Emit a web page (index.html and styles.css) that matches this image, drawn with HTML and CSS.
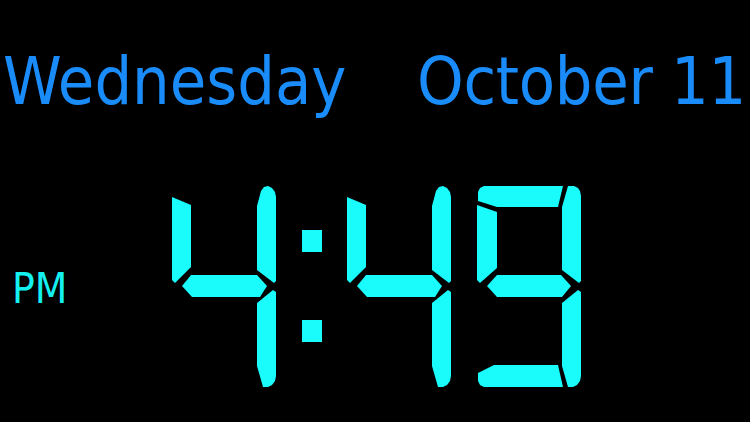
FILE: index.html
```html
<!DOCTYPE html>
<html>
<head>
<meta charset="utf-8">
<link rel="stylesheet" href="styles.css">
</head>
<body>
<div class="screen">
  <div class="date-row">
    <span class="day">Wednesday</span>
    <span class="date">October 11</span>
  </div>
  <div class="time-row">
    <div class="ampm">PM</div>
    <div class="clock">
      <svg class="digit" viewBox="0 0 105 201" width="105" height="201">
        <polygon points="0,11 19,19 19,81 3,97 0,94"/>
        <polygon points="10,100 19,89 85,89 95,100 88,111 20,111"/>
        <polygon points="85,20 89,5 92,1 96,0 100,2 103,6 104,11 104,95 102,97 85,84"/>
        <polygon points="85,117 101,104 104,106 104,190 103,195 100,199 96,201 91,201 85,180"/>
      </svg>
      <div class="colon">
        <div class="dot"></div>
        <div class="dot"></div>
      </div>
      <svg class="digit" viewBox="0 0 105 201" width="105" height="201">
        <polygon points="0,11 19,19 19,81 3,97 0,94"/>
        <polygon points="10,100 19,89 85,89 95,100 88,111 20,111"/>
        <polygon points="85,20 89,5 92,1 96,0 100,2 103,6 104,11 104,95 102,97 85,84"/>
        <polygon points="85,117 101,104 104,106 104,190 103,195 100,199 96,201 91,201 85,180"/>
      </svg>
      <svg class="digit" viewBox="0 0 105 201" width="105" height="201">
        <polygon points="1,15 1,6 3,2 7,0 86,0 81,21 20,21"/>
        <polygon points="0,19 20,26 20,82 3,97 0,94"/>
        <polygon points="10,100 20,89 84,89 94,100 85,111 20,111"/>
        <polygon points="85,21 91,0 97,0 101,2 103,5 104,10 104,95 102,97 85,84"/>
        <polygon points="85,117 101,104 104,106 104,190 103,195 100,199 96,201 91,201 85,180"/>
        <polygon points="1,187 17,179 81,179 86,201 7,201 3,199 1,195"/>
      </svg>
    </div>
  </div>
</div>
</body>
</html>
```
FILE: styles.css
```css
html, body {
  margin: 0;
  padding: 0;
  background: #000;
}

.screen {
  width: 750px;
  height: 422px;
  background: #000;
  overflow: hidden;
  font-family: "DejaVu Sans Condensed", "DejaVu Sans", sans-serif;
  font-stretch: condensed;
}

.date-row {
  display: flex;
  justify-content: space-between;
  padding: 49px 4px 0 3px;
  height: 66px;
  font-size: 66px;
  line-height: 66px;
  color: #1a8cfa;
  white-space: nowrap;
}

.date {
  letter-spacing: -0.3px;
}

.time-row {
  display: flex;
  margin-top: 71px;
}

.ampm {
  width: 160px;
  padding-left: 12px;
  margin-top: 82px;
  font-size: 42px;
  line-height: 42px;
  height: 42px;
  color: #14f0f0;
}

.clock {
  display: flex;
  gap: 25px;
}

.digit {
  display: block;
  fill: #1afcfc;
}

.colon {
  display: flex;
  flex-direction: column;
  width: 20px;
  padding-top: 44px;
  gap: 68px;
}

.dot {
  width: 20px;
  height: 22px;
  background: #1afcfc;
}
```
